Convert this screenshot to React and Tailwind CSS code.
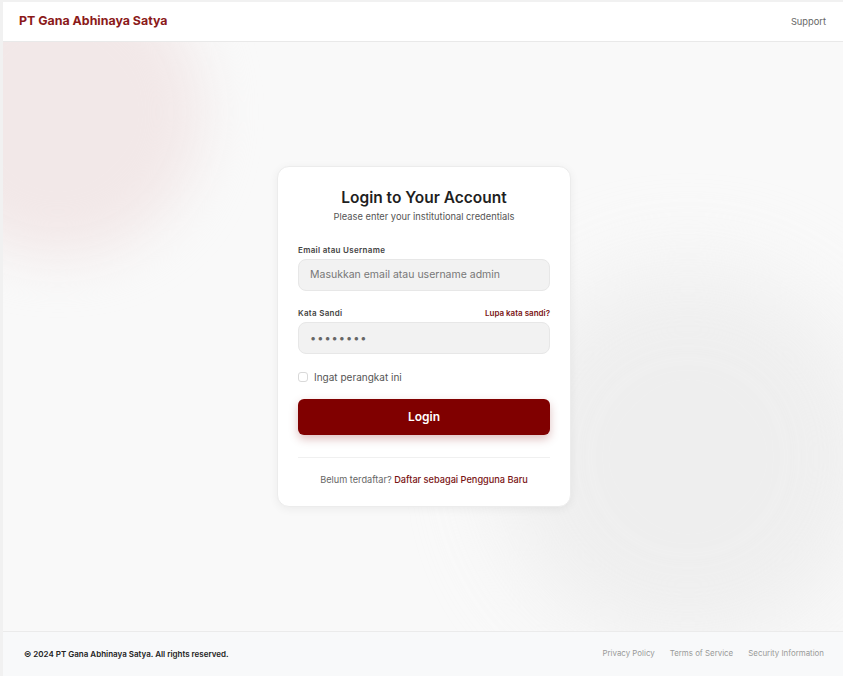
import React from 'react';

const App = () => {
  return (
    <div
      className="h-[676px] w-full flex flex-col bg-[#f9f9f9] border-l-[3px] border-t-2 border-[#f1f1f1] overflow-hidden"
      style={{ fontFamily: 'Inter, "Noto Sans", sans-serif' }}
    >
      <header className="h-[40px] shrink-0 bg-white border-b border-[#e9e9e9] flex items-center justify-between px-4">
        <div className="text-[12.4px] font-bold text-[#8b1a1a]">PT Gana Abhinaya Satya</div>
        <a className="text-[9.3px] text-[#666] mr-[1px]">Support</a>
      </header>

      <main className="relative flex-1 flex items-center justify-center overflow-hidden">
        <div className="absolute -left-[90px] -top-[75px] w-[290px] h-[290px] rounded-full bg-[#f2e8e8] blur-[26px]" />
        <div className="absolute left-[495px] top-[225px] w-[380px] h-[380px] rounded-full bg-[#ececec] blur-[44px] opacity-80" />

        <div className="relative ml-[2px] w-[294px] bg-white rounded-xl border border-[#ececec] shadow-[0_2px_10px_rgba(0,0,0,0.06)] px-5 pt-[20px] pb-[19px]">
          <div className="text-center">
            <h1 className="text-[15.5px] font-semibold text-[#1f1f1f] leading-[22px]">Login to Your Account</h1>
            <p className="text-[9.3px] text-[#555] leading-[14px] mt-[1px]">Please enter your institutional credentials</p>
          </div>

          <div className="mt-[20px]">
            <label className="block text-[8px] leading-[12px] font-semibold text-[#444] tracking-[0.3px]">Email atau Username</label>
            <div className="mt-[3px] h-[32px] rounded-lg bg-[#f2f2f2] border border-[#e7e7e7] flex items-center px-[11px] text-[10.5px] text-[#777]">
              Masukkan email atau username admin
            </div>
          </div>

          <div className="mt-[16px]">
            <div className="flex items-center justify-between leading-[12px]">
              <label className="text-[8px] font-semibold text-[#444] tracking-[0.3px]">Kata Sandi</label>
              <a className="text-[8px] font-semibold text-[#7a1414]">Lupa kata sandi?</a>
            </div>
            <div className="mt-[3px] h-[32px] rounded-lg bg-[#f2f2f2] border border-[#e7e7e7] flex items-center px-[11px] text-[11px] text-[#666] tracking-[1px]">
              ••••••••
            </div>
          </div>

          <div className="mt-[17px] h-[12px] flex items-center gap-[6px]">
            <span className="w-[10px] h-[10px] rounded-[3px] border border-[#d9d9d9] bg-white" />
            <span className="text-[10px] text-[#555]">Ingat perangkat ini</span>
          </div>

          <button className="mt-[16px] w-full h-[36px] rounded-md bg-[#800000] text-white text-[12px] font-semibold shadow-[0_4px_10px_rgba(128,0,0,0.25)]">
            Login
          </button>

          <div className="mt-[22px] border-t border-[#f0f0f0]" />

          <p className="mt-[15px] leading-[14px] text-center text-[9.2px] text-[#666]">
            Belum terdaftar? <a className="text-[#7a1414] font-medium">Daftar sebagai Pengguna Baru</a>
          </p>
        </div>
      </main>

      <footer className="h-[45px] shrink-0 bg-[#f8f9fa] border-t border-[#ebebeb] flex items-center justify-between pl-[21px] pr-[19px]">
        <div className="text-[8px] font-semibold text-[#222]">© 2024 PT Gana Abhinaya Satya. All rights reserved.</div>
        <div className="flex gap-[15px] text-[7.9px] text-[#999]">
          <a>Privacy Policy</a>
          <a>Terms of Service</a>
          <a>Security Information</a>
        </div>
      </footer>
    </div>
  );
};

export default App;
